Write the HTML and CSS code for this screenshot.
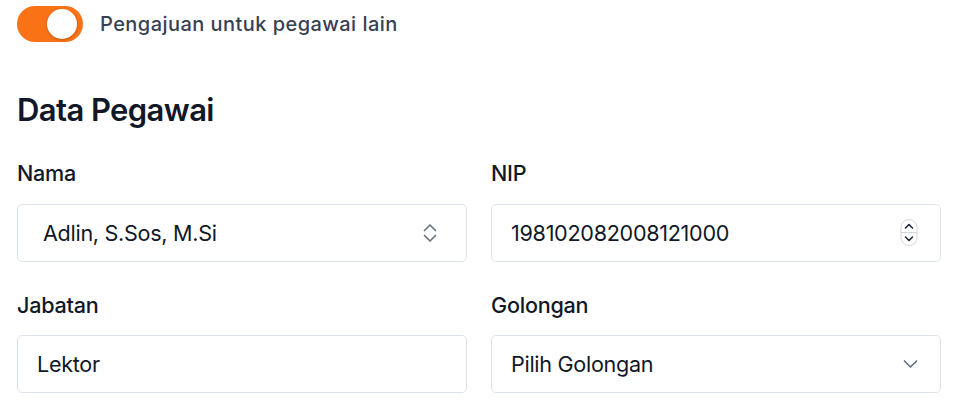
FILE: index.html
```html
<!DOCTYPE html>
<html lang="id">
<head>
<meta charset="utf-8">
<title>Data Pegawai</title>
<link rel="stylesheet" href="styles.css">
</head>
<body>
<main class="page">
  <div class="toggle-row">
    <span class="switch" role="switch" aria-checked="true"><span class="knob"></span></span>
    <span class="toggle-label">Pengajuan untuk pegawai lain</span>
  </div>

  <h2 class="title">Data Pegawai</h2>

  <div class="grid">
    <div class="field">
      <label class="label">Nama</label>
      <div class="control control-combo" role="combobox">
        <span class="value">Adlin, S.Sos, M.Si</span>
        <svg class="icon-updown" width="14" height="20" viewBox="0 0 14 20" fill="none" stroke="#6b7280" stroke-width="1.7" stroke-linecap="round" stroke-linejoin="round"><path d="M1.5 7.5L7 2l5.5 5.5"/><path d="M1.5 12.5L7 18l5.5-5.5"/></svg>
      </div>
    </div>

    <div class="field">
      <label class="label">NIP</label>
      <div class="control control-number">
        <input class="value input" type="text" value="198102082008121000" readonly>
        <svg class="icon-spin" width="18" height="27" viewBox="0 0 18 27" fill="none"><rect x="1" y="0.5" width="16" height="26" rx="8" fill="#fff" stroke="#d4d6da"/><line x1="1" y1="13.5" x2="17" y2="13.5" stroke="#d4d6da"/><path d="M5.5 9l3.5-3.5L12.5 9" stroke="#1f2937" stroke-width="1.6" stroke-linecap="round" stroke-linejoin="round"/><path d="M5.5 18l3.5 3.5L12.5 18" stroke="#1f2937" stroke-width="1.6" stroke-linecap="round" stroke-linejoin="round"/></svg>
      </div>
    </div>

    <div class="field">
      <label class="label">Jabatan</label>
      <div class="control">
        <input class="value input" type="text" value="Lektor" readonly>
      </div>
    </div>

    <div class="field">
      <label class="label">Golongan</label>
      <div class="control control-select" role="combobox">
        <span class="value">Pilih Golongan</span>
        <svg class="icon-down" width="15" height="10" viewBox="0 0 15 10" fill="none" stroke="#6b7280" stroke-width="1.7" stroke-linecap="round" stroke-linejoin="round"><path d="M1.5 2l6 6 6-6"/></svg>
      </div>
    </div>
  </div>
</main>
</body>
</html>
```
FILE: styles.css
```css
* { box-sizing: border-box; }

body {
  margin: 0;
  background: #ffffff;
  font-family: Inter, "Noto Sans", sans-serif;
  color: #111827;
}

.page {
  width: 941px;
  padding: 6px 0 0 17px;
}

.toggle-row {
  display: flex;
  align-items: center;
  gap: 17px;
  height: 36px;
}

.switch {
  display: flex;
  align-items: center;
  justify-content: flex-end;
  width: 66px;
  height: 36px;
  padding-right: 6px;
  border-radius: 18px;
  background: #f97316;
}

.knob {
  width: 30px;
  height: 30px;
  border-radius: 50%;
  background: #ffffff;
  box-shadow: 0 1px 3px rgba(0, 0, 0, 0.22);
}

.toggle-label {
  font-size: 20px;
  line-height: 24px;
  font-weight: 450;
  letter-spacing: 0.45px;
  color: #374151;
}

.title {
  margin: 49px 0 0;
  font-size: 31px;
  line-height: 37px;
  font-weight: 600;
  letter-spacing: -0.6px;
  color: #111827;
}

.grid {
  margin-top: 32px;
  display: grid;
  grid-template-columns: 1fr 1fr;
  column-gap: 24px;
  row-gap: 30px;
}

.field {
  display: flex;
  flex-direction: column;
  gap: 17.5px;
}

.label {
  font-size: 21.6px;
  line-height: 26px;
  font-weight: 500;
  letter-spacing: -0.25px;
  color: #111827;
}

.control {
  display: flex;
  align-items: center;
  gap: 12px;
  height: 58px;
  padding: 0 19px;
  border: 1px solid #dde3ee;
  border-radius: 5px;
  background: #ffffff;
}

.control-combo {
  padding-left: 25px;
  padding-right: 29px;
}

.control-number,
.control-select {
  padding-right: 22px;
}

.value {
  flex: 1;
  min-width: 0;
  font-size: 21.6px;
  line-height: 26px;
  font-weight: 420;
  letter-spacing: -0.3px;
  color: #111827;
}

.input {
  border: none;
  outline: none;
  padding: 0;
  margin: 0;
  background: transparent;
  font-family: inherit;
}

.icon-updown,
.icon-spin,
.icon-down {
  flex: none;
}
```
